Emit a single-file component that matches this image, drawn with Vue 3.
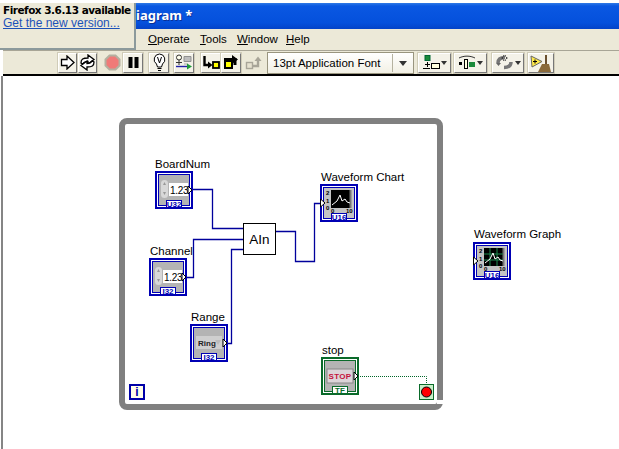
<script setup>
const wires = [
  'M193 189.500H212.500V228.500H243',
  'M187 277.500H193.500V239.500H243',
  'M228 343.500H231.500V249.500H243',
  'M275 231.500H295.500V261.500H314.500V203.500H320',
]

const terminals = [
  { id: 'board', x: 155, y: 171, kind: 'num', tag: 'U32', out: true },
  { id: 'channel', x: 149, y: 258, kind: 'num', tag: 'I32', out: true },
  { id: 'range', x: 190, y: 324, kind: 'ring', tag: 'I32', out: true },
  { id: 'chart', x: 320, y: 184, kind: 'chart', tag: 'U16', out: false },
  { id: 'graph', x: 473, y: 242, kind: 'graph', tag: 'U16', out: false },
  { id: 'stop', x: 321, y: 357, kind: 'stop', tag: 'TF', out: true },
]

const labels = [
  { text: 'BoardNum', x: 155, y: 168 },
  { text: 'Waveform Chart', x: 321, y: 181 },
  { text: 'Waveform Graph', x: 474, y: 238 },
  { text: 'Channel', x: 150, y: 255 },
  { text: 'Range', x: 191, y: 321 },
  { text: 'stop', x: 322, y: 354 },
]
</script>

<template>
  <div class="window">
    <div class="tip">
      <strong>Firefox 3.6.13 available</strong>
      <a>Get the new version...</a>
    </div>

    <div class="titlebar">iagram *</div>

    <nav class="menubar">
      <span><u>O</u>perate</span>
      <span><u>T</u>ools</span>
      <span><u>W</u>indow</span>
      <span><u>H</u>elp</span>
    </nav>

    <div class="toolbar">
      <button class="btn slim">
        <svg width="15" height="15" viewBox="0 0 15 15"><path d="M1.500 4.500H7V1L14 7.500L7 14V10.500H1.500Z" fill="#fff" stroke="#000" stroke-width="1.300"/></svg>
      </button>
      <button class="btn slim next">
        <svg width="17" height="17" viewBox="0 0 17 17" fill="#fff" stroke="#000" stroke-width="1.300"><path d="M2 9C2 5 4 4 9 4V1L15 5.500L9 10V7.500C6 7.500 5 8 4 10Z"/><path d="M15 8C15 12 13 13 8 13V16L2 11.500L8 7V9.500C11 9.500 12 9 13 7Z"/></svg>
      </button>
      <span class="flat abort">
        <svg width="17" height="17" viewBox="0 0 17 17"><path d="M5.500 1.500H11.500L15.500 5.500V11.500L11.500 15.500H5.500L1.500 11.500V5.500Z" fill="#f07a78" stroke="#b4b0a0" stroke-width="2"/></svg>
      </span>
      <button class="btn">
        <svg width="13" height="13" viewBox="0 0 13 13"><path d="M1.500 1H5.500V12H1.500ZM7.500 1H11.500V12H7.500Z" fill="#000"/></svg>
      </button>
      <button class="btn bulb">
        <svg width="15" height="19" viewBox="0 0 15 19"><path d="M7.500 1A5.500 5.500 0 0 0 4.500 11L5.500 14H9.500L10.500 11A5.500 5.500 0 0 0 7.500 1Z" fill="#fff" stroke="#000"/><path d="M5.500 4L7.500 10L9.500 4M5.500 15.500H9.500M6 17.500H9" fill="none" stroke="#000"/></svg>
      </button>
      <button class="btn probe">
        <svg width="18" height="17" viewBox="0 0 18 17"><circle cx="4" cy="3.500" r="2.500" fill="#ffe" stroke="#333"/><path d="M4 6V11" stroke="#333"/><path d="M1 8.500H7" stroke="#333"/><path d="M1 12.500H12" stroke="#22a" stroke-width="1.400"/><path d="M9 2.500H16V7.500H9Z" fill="#bdbdbd" stroke="#909090"/><path d="M9 10H13" stroke="#aaa"/><path d="M12 9.500V15.500L17 12.500Z" fill="#1f9a3a"/></svg>
      </button>
      <button class="btn step">
        <svg width="18" height="15" viewBox="0 0 18 15"><path d="M2.500 1V10H8" fill="none" stroke="#000" stroke-width="2.400"/><path d="M6 6.500L10.500 10L6 13.500Z" fill="#000"/><rect x="11" y="7" width="6" height="6" fill="#ff0" stroke="#000" stroke-width="1.800"/></svg>
      </button>
      <button class="btn">
        <svg width="18" height="16" viewBox="0 0 18 16"><rect x="3" y="6" width="7" height="7" fill="#ff0" stroke="#000" stroke-width="2"/><path d="M2 4.500H13V10" fill="none" stroke="#000" stroke-width="3"/><path d="M10 0L16 4.500L10 9Z" fill="#000"/></svg>
      </button>
      <span class="flat out">
        <svg width="18" height="15" viewBox="0 0 18 15"><rect x="1.500" y="7.500" width="6" height="6" fill="#e6e2d0" stroke="#a8a598" stroke-width="1.400"/><path d="M8 11H13V6" fill="none" stroke="#a8a598" stroke-width="2.400"/><path d="M9.500 6L13 1.500L16.500 6Z" fill="#a8a598"/></svg>
      </span>
      <div class="font-select">
        <span class="font-name">13pt Application Font</span>
        <span class="font-arrow"></span>
      </div>
      <button class="btn wide align">
        <svg width="18" height="15" viewBox="0 0 18 15"><rect x="3" y="0.500" width="5" height="5" fill="#1a8a3a" stroke="#063"/><path d="M5.500 7V12M3 9.500H8M1 13.500H8" stroke="#000"/><rect x="9.500" y="8.500" width="8" height="5" fill="#ffd" stroke="#000"/></svg>
        <span class="caret"></span>
      </button>
      <button class="btn wide dist">
        <svg width="18" height="15" viewBox="0 0 18 15"><path d="M1 3C6 0.500 12 0.500 17 3" stroke="#333" fill="none"/><rect x="1" y="7" width="3" height="3" fill="#000"/><rect x="6.500" y="4.500" width="3" height="9" fill="#ffd" stroke="#000"/><rect x="11" y="7" width="6" height="5" fill="#1a8a3a"/></svg>
        <span class="caret"></span>
      </button>
      <button class="btn wide order">
        <svg width="19" height="17" viewBox="0 0 19 17"><path d="M3 9C3 5 6 3.500 10 3.500M16 8C16 12 13 13.500 9 13.500" fill="none" stroke="#777" stroke-width="3.500"/><path d="M6 4L11 1V7ZM13 4L8 1V7" fill="#333"/><path d="M1 9H6L3.500 12Z" fill="#666"/></svg>
        <span class="caret"></span>
      </button>
      <button class="btn clean">
        <svg width="22" height="20" viewBox="0 0 22 20"><path d="M1 3L12 8.500L2 14Z" fill="#ffe94a" stroke="#666"/><path d="M3 8.500H7M5 6.500V10.500" stroke="#000"/><path d="M16 2V11" stroke="#6a5030" stroke-width="2"/><path d="M12 11H19L21 19H8Z" fill="#8a6a3a"/></svg>
      </button>
    </div>

    <div class="canvas">
      <svg class="diagram" width="616" height="373" viewBox="3 76 616 373">
        <rect x="122" y="121" width="318" height="286" rx="5" fill="none" stroke="#808080" stroke-width="6"/>
        <rect x="437" y="400" width="7" height="4" fill="#fff"/>

        <path v-for="w in wires" :key="w" :d="w" fill="none" stroke="#00009c" stroke-width="1.300"/>
        <path d="M358 376.500H426.500V384" fill="none" stroke="#006428" stroke-dasharray="1 1"/>

        <rect x="243.500" y="223.500" width="32" height="31" fill="#fff" stroke="#000"/>
        <text x="259.500" y="244" class="node-name" text-anchor="middle">AIn</text>

        <text v-for="l in labels" :key="l.text" :x="l.x" :y="l.y" class="label">{{ l.text }}</text>

        <g v-for="t in terminals" :key="t.id" :transform="`translate(${t.x} ${t.y})`">
          <rect x="1" y="1" width="36" height="36" fill="#fff" :stroke="t.kind === 'stop' ? '#0a6a2a' : '#0000b4'" stroke-width="2"/>
          <rect x="3.500" y="3.500" width="31" height="31" fill="#b4b4b4" :stroke="t.kind === 'stop' ? '#0a6a2a' : '#0000b4'"/>

          <template v-if="t.kind === 'num'">
            <rect x="6" y="9" width="7" height="18" rx="3.500" fill="#d8d8d8"/>
            <path d="M9.500 11L11 14H8ZM9.500 24L11 21H8Z" fill="#999"/>
            <rect x="14" y="12" width="19" height="13" fill="#fff"/>
            <text x="15" y="22.500" class="num">1.23</text>
          </template>

          <template v-if="t.kind === 'ring'">
            <rect x="6" y="12" width="26" height="13" fill="#cfcfcf"/>
            <text x="8" y="22" class="ring">Ring</text>
            <path d="M25 16H31L28 21Z" fill="#bbb"/>
          </template>

          <template v-if="t.kind === 'chart' || t.kind === 'graph'">
            <rect x="4" y="4" width="30" height="30" fill="#c4c4c4"/>
            <rect x="11" y="6" width="19" height="18" fill="#000"/>
            <path d="M30.500 6V24" stroke="#777" stroke-width="2"/>
            <path v-if="t.kind === 'graph'" d="M17 6V24M24 6V24M11 12H30M11 18H30" stroke="#1f8a50" fill="none"/>
            <path d="M12 21L17 17L20 11L22 17L25 15L27 18L30 19" fill="none" stroke="#fff"/>
            <text x="6" y="11" class="axis">2</text>
            <text x="6" y="19" class="axis">1</text>
            <text x="6" y="26" class="axis">0</text>
            <text x="11" y="29" class="axis">0</text>
            <text x="26" y="29" class="axis">10</text>
          </template>

          <template v-if="t.kind === 'stop'">
            <rect x="6" y="12" width="26" height="14" fill="#dcd4d8" stroke="#888"/>
            <text x="19" y="22" class="stop-word" text-anchor="middle">STOP</text>
          </template>

          <rect x="11.500" y="29.500" width="15" height="7" fill="#fff" :stroke="t.kind === 'stop' ? '#0a6a2a' : '#0000b4'"/>
          <text x="19" y="36" class="tag" :fill="t.kind === 'stop' ? '#0a6a2a' : '#0000b4'" text-anchor="middle">{{ t.tag }}</text>

          <path v-if="t.out" d="M33 15L37 19L33 23Z" fill="#fff" stroke="#000"/>
          <path v-else d="M0.500 15L5 19L0.500 23Z" fill="#fff" stroke="#000"/>
        </g>

        <rect x="419.500" y="384.500" width="14" height="15" fill="#c8f0c8" stroke="#0a6a2a"/>
        <circle cx="426.500" cy="392" r="5" fill="#f00" stroke="#000"/>

        <rect x="130" y="385" width="14" height="14" fill="#fffde8" stroke="#0000a8" stroke-width="2"/>
        <text x="137" y="396" class="iter" text-anchor="middle">i</text>
      </svg>
    </div>
  </div>
</template>

<style scoped>
.window {
  position: relative;
  width: 619px;
  height: 449px;
  overflow: hidden;
  padding-left: 3px;
  box-sizing: border-box;
  background: #fff;
  font-family: "Liberation Sans", sans-serif;
  display: flex;
  flex-direction: column;
}

.tip {
  position: absolute;
  top: 3px;
  left: 0;
  width: 131px;
  height: 44px;
  padding: 1px 0 0 3px;
  background: #ece9d8;
  border-right: 2px solid #8c9a9c;
  border-bottom: 2px solid #8c9a9c;
  font-size: 12px;
  line-height: 13px;
  display: flex;
  flex-direction: column;
}

.tip strong {
  white-space: nowrap;
  color: #000;
  font-family: "DejaVu Sans", sans-serif;
  font-size: 10.500px;
  letter-spacing: -0.500px;
}

.tip a {
  color: #1c52b8;
  text-decoration: underline;
}

.titlebar {
  margin-top: 3px;
  height: 26px;
  flex: none;
  padding-left: 133px;
  background: linear-gradient(#2f7ae6 0, #0a58e2 3px, #0450dc 20px, #0343c8 100%);
  color: #fff;
  font-family: "Noto Sans", sans-serif;
  font-size: 13px;
  font-weight: 700;
  line-height: 24px;
  text-shadow: 1px 1px #0a2f96;
}

.menubar {
  height: 22px;
  box-sizing: border-box;
  flex: none;
  display: flex;
  padding-left: 145px;
  background: #ece9d8;
  border-bottom: 1px solid #a8a596;
  font-size: 11.500px;
  line-height: 20px;
  color: #000;
}

.menubar span:nth-child(1) { width: 52px; }
.menubar span:nth-child(2) { width: 37px; }
.menubar span:nth-child(3) { width: 49px; }

.toolbar {
  height: 25px;
  box-sizing: border-box;
  flex: none;
  display: flex;
  align-items: center;
  background: #ece9d8;
  border-bottom: 2px solid #000;
  padding-left: 55px;
}

.btn {
  width: 20px;
  height: 20px;
  flex: none;
  margin: 0;
  padding: 0;
  display: flex;
  align-items: center;
  justify-content: center;
  background: #f4f2e8;
  border: 1px solid #fff;
  border-right-color: #777;
  border-bottom-color: #777;
  box-shadow: 0 0 0 1px #d0ccb8;
  box-sizing: border-box;
}

.slim { width: 19px; }
.next { margin-left: 1px; }

.flat {
  width: 21px;
  height: 20px;
  flex: none;
  display: flex;
  align-items: center;
  justify-content: center;
}

.abort { margin-left: 5px; }
.bulb { margin-left: 6px; }
.probe { margin-left: 5px; }
.step { margin-left: 7px; }
.out { margin-left: 2px; }

.font-select {
  width: 147px;
  height: 22px;
  margin-left: 3px;
  flex: none;
  display: flex;
  align-items: center;
  justify-content: space-between;
  box-sizing: border-box;
  border: 1px solid #99957f;
  background: linear-gradient(#fff, #f2f0e4);
  font-size: 11.500px;
}

.font-name {
  padding-left: 5px;
  color: #000;
}

.font-arrow {
  width: 20px;
  height: 18px;
  border-left: 1px solid #b5b2a0;
  position: relative;
}

.font-arrow::after {
  content: '';
  position: absolute;
  left: 6px;
  top: 7px;
  border: 4px solid transparent;
  border-top: 5px solid #333;
  border-bottom: 0;
}

.wide {
  width: 33px;
  gap: 1px;
}

.align { margin-left: 4px; }
.dist { margin-left: 3px; }
.order { width: 32px; margin-left: 5px; }

.caret {
  width: 0;
  height: 0;
  border: 3.500px solid transparent;
  border-top: 4px solid #333;
  border-bottom: 0;
}

.clean {
  width: 26px;
  margin-left: 4px;
}

.canvas {
  flex: 1;
  border-left: 2px solid #858585;
  margin-left: -2px;
  min-height: 0;
}

.diagram {
  display: block;
}

.label,
.node-name {
  font-size: 11.500px;
  fill: #000;
}

.node-name {
  font-size: 13.500px;
}

.num {
  font-size: 10px;
  letter-spacing: -0.300px;
  fill: #000;
}

.ring {
  font-size: 8px;
  font-weight: 700;
  fill: #222;
}

.axis {
  font-size: 6px;
  font-weight: 700;
  fill: #000;
}

.stop-word {
  font-size: 8px;
  font-weight: 700;
  letter-spacing: 0.300px;
  fill: #c4123c;
}

.tag {
  font-size: 8px;
  font-weight: 700;
}

.iter {
  font-size: 12px;
  font-weight: 700;
  fill: #0000a8;
}
</style>
